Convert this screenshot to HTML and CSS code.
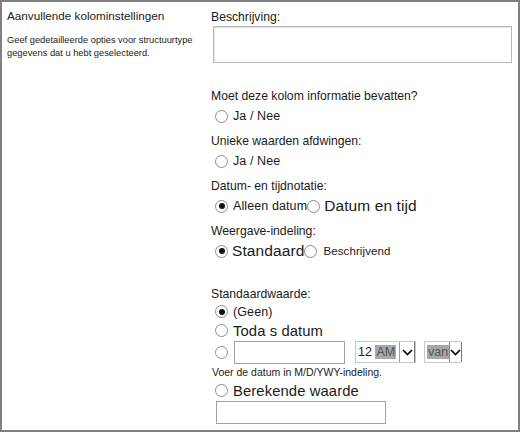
FILE: index.html
```html
<!DOCTYPE html>
<html lang="nl">
<head>
<meta charset="utf-8">
<title>Aanvullende kolominstellingen</title>
<link rel="stylesheet" href="styles.css">
</head>
<body>
<div class="panel">
  <div class="side">
    <div class="side-title">Aanvullende kolominstellingen</div>
    <div class="side-desc">Geef gedetailleerde opties voor structuurtype<br>gegevens dat u hebt geselecteerd.</div>
  </div>
  <div class="main">
    <div class="label first">Beschrijving:</div>
    <div class="textarea"></div>

    <div class="label q1">Moet deze kolom informatie bevatten?</div>
    <div class="row"><span class="radio"></span><span class="opt">Ja / Nee</span></div>

    <div class="label">Unieke waarden afdwingen:</div>
    <div class="row"><span class="radio"></span><span class="opt">Ja / Nee</span></div>

    <div class="label">Datum- en tijdnotatie:</div>
    <div class="row"><span class="radio on"></span><span class="opt">Alleen datum</span><span class="radio"></span><span class="opt big">Datum en tijd</span></div>

    <div class="label">Weergave-indeling:</div>
    <div class="row"><span class="radio on"></span><span class="opt big">Standaard</span><span class="radio"></span><span class="opt small">Beschrijvend</span></div>

    <div class="label q2">Standaardwaarde:</div>
    <div class="row r1"><span class="radio on"></span><span class="opt">(Geen)</span></div>
    <div class="row r2"><span class="radio"></span><span class="opt mid">Toda s datum</span></div>
    <div class="row r3">
      <span class="radio"></span>
      <span class="input date"></span>
      <span class="select s1"><span class="sel-text">12 <span class="hl">AM</span></span><span class="arrow"><svg width="11" height="7" viewBox="0 0 11 7"><path d="M1 1l4.5 4.5L10 1" fill="none" stroke="#000" stroke-width="1.6"/></svg></span></span>
      <span class="select s2"><span class="sel-text"><span class="hl">van</span></span><span class="arrow"><svg width="11" height="7" viewBox="0 0 11 7"><path d="M1 1l4.5 4.5L10 1" fill="none" stroke="#000" stroke-width="1.6"/></svg></span></span>
    </div>
    <div class="hint">Voer de datum in M/D/YWY-indeling.</div>
    <div class="row r4"><span class="radio"></span><span class="opt mid">Berekende waarde</span></div>
    <div class="input calc"></div>
  </div>
</div>
</body>
</html>
```
FILE: styles.css
```css
* { box-sizing: border-box; }
html, body { margin: 0; padding: 0; background: #fff; }
body { font-family: "Liberation Sans", Arial, sans-serif; color: #1a1a1a; }

.panel {
  width: 520px;
  height: 432px;
  border: 2px solid #808080;
  display: flex;
  background: #fff;
}

.side {
  width: 209px;
  padding: 6px 0 0 5px;
}
.side-title {
  font-size: 11.7px;
  line-height: 15px;
  color: #222;
}
.side-desc {
  margin-top: 11px;
  font-size: 9.3px;
  line-height: 13px;
  color: #222;
}

.main {
  flex: 1;
  padding-top: 7px;
}
.label {
  font-size: 12.2px;
  line-height: 16px;
  height: 16px;
  margin-top: 7px;
}
.label.first { margin-top: 0; }
.label.q1 { margin-top: 25px; }
.label.q2 { margin-top: 25px; }

.textarea {
  margin: 1px 0 0 2px;
  width: 299px;
  height: 37px;
  border: 1px solid #b9b9b9;
  box-shadow: inset 1px 1px 0 #e4e4e4;
}

.row {
  display: flex;
  align-items: center;
  height: 20px;
  margin-top: 2px;
  padding-left: 4px;
}
.radio {
  width: 13px;
  height: 13px;
  border: 1px solid #8c8c8c;
  border-radius: 50%;
  flex: none;
  display: flex;
  align-items: center;
  justify-content: center;
  background: #fff;
}
.radio.on::after {
  content: "";
  width: 6px;
  height: 6px;
  border-radius: 50%;
  background: #111;
}
.opt {
  font-size: 12.5px;
  margin-left: 5px;
  white-space: nowrap;
  letter-spacing: 0.1px;
}
.opt.big { font-size: 15.5px; margin-left: 4px; }
.opt.small { font-size: 11.5px; margin-left: 6px; }
.opt.mid { font-size: 14.8px; margin-left: 5px; }

.row.r1 { margin-top: 0; height: 19px; }
.row.r2 { margin-top: 0; height: 19px; }
.row.r3 { margin-top: 0; height: 24px; }
.row.r4 { margin-top: 1px; height: 21px; }

.input {
  display: block;
  border: 1px solid #a0a0a0;
  background: #fff;
}
.input.date {
  width: 111px;
  height: 23px;
  margin-left: 6px;
}
.select {
  display: flex;
  align-items: center;
  height: 22px;
  border: 1px solid #c8c8c8;
  background: #fff;
  font-size: 12.5px;
}
.select.s1 { width: 61px; margin-left: 10px; }
.select.s2 { width: 37px; margin-left: 8px; }
.sel-text { flex: 1; padding-left: 2px; white-space: nowrap; }
.hl { background: #a8a8a8; color: #555; padding: 0 1px; }
.arrow {
  width: 16px;
  height: 20px;
  border-left: 1px solid #a0a0a0;
  border-right: 1px solid #777;
  display: flex;
  align-items: center;
  justify-content: center;
  background: #fff;
}
.s2 .arrow { border-left: 1px solid #888; }

.hint {
  font-size: 10.5px;
  line-height: 14px;
  margin-top: 1px;
  padding-left: 1px;
}
.input.calc {
  width: 170px;
  height: 23px;
  margin: 0 0 0 5px;
}
```
